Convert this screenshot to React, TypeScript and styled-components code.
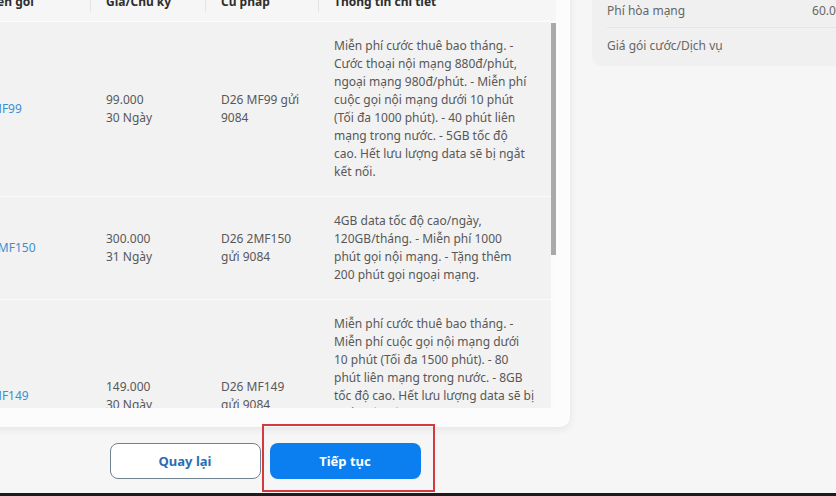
import React from 'react';
import styled, { createGlobalStyle } from 'styled-components';

type Plan = {
  name: string
  price: string
  days: string
  syntax: string[]
  info: string[]
};

const plans: Plan[] = [
  {
    name: 'MF99',
    price: '99.000',
    days: '30 Ngày',
    syntax: ['D26 MF99 gửi', '9084'],
    info: [
      'Miễn phí cước thuê bao tháng. -',
      'Cước thoại nội mạng 880đ/phút,',
      'ngoại mạng 980đ/phút. - Miễn phí',
      'cuộc gọi nội mạng dưới 10 phút',
      '(Tối đa 1000 phút). - 40 phút liên',
      'mạng trong nước. - 5GB tốc độ',
      'cao. Hết lưu lượng data sẽ bị ngắt',
      'kết nối.'
    ]
  },
  {
    name: '2MF150',
    price: '300.000',
    days: '31 Ngày',
    syntax: ['D26 2MF150', 'gửi 9084'],
    info: [
      '4GB data tốc độ cao/ngày,',
      '120GB/tháng. - Miễn phí 1000',
      'phút gọi nội mạng. - Tặng thêm',
      '200 phút gọi ngoại mạng.'
    ]
  },
  {
    name: 'MF149',
    price: '149.000',
    days: '30 Ngày',
    syntax: ['D26 MF149', 'gửi 9084'],
    info: [
      'Miễn phí cước thuê bao tháng. -',
      'Miễn phí cuộc gọi nội mạng dưới',
      '10 phút (Tối đa 1500 phút). - 80',
      'phút liên mạng trong nước. - 8GB',
      'tốc độ cao. Hết lưu lượng data sẽ bị',
      'ngắt kết nối. - Cước thoại nội',
      'mạng 880đ/phút, ngoại mạng',
      '980đ/phút. - Miễn phí SMS nội',
      'mạng.'
    ]
  }
];

const columns = ['Tên gói', 'Giá/Chu kỳ', 'Cú pháp', 'Thông tin chi tiết'];

const App = () => {
  return (
    <Screen>
      <GlobalStyle />
      <Canvas>
        <LeftCol>
          <Card>
            <HeadRow>
              {columns.map((c, i) => (
                <HeadCell key={c} divider={i > 0}>{c}</HeadCell>
              ))}
            </HeadRow>
            <BodyWrap>
              <Body>
                {plans.map(p => (
                  <Row key={p.name}>
                    <NameCell>{p.name}</NameCell>
                    <Cell>
                      <Line>{p.price}</Line>
                      <Line>{p.days}</Line>
                    </Cell>
                    <Cell>
                      {p.syntax.map(s => <Line key={s}>{s}</Line>)}
                    </Cell>
                    <InfoCell>
                      {p.info.map((t, i) => <Line key={i}>{t}</Line>)}
                    </InfoCell>
                  </Row>
                ))}
              </Body>
              <ScrollTrack>
                <ScrollThumb />
              </ScrollTrack>
            </BodyWrap>
          </Card>
          <Actions>
            <BackButton>Quay lại</BackButton>
            <Highlight>
              <NextButton>Tiếp tục</NextButton>
            </Highlight>
          </Actions>
        </LeftCol>
        <RightCol>
          <Summary>
            <SummaryRow>
              <span>Phí hòa mạng</span>
              <span>60.000đ</span>
            </SummaryRow>
            <SummaryRow>
              <span>Giá gói cước/Dịch vụ</span>
              <span></span>
            </SummaryRow>
          </Summary>
        </RightCol>
      </Canvas>
    </Screen>
  );
};

export default App;

const GlobalStyle = createGlobalStyle`
  html, body {
    margin: 0;
    padding: 0;
    background: #f6f6f6;
  }
  body {
    font-family: "Noto Sans", "Open Sans", sans-serif;
  }
`;

const Screen = styled.div`
  width: 836px;
  height: 496px;
  overflow: hidden;
  background: #f6f6f6;
  border-bottom: 3px solid #1c1c1c;
  box-sizing: border-box;
`;

const Canvas = styled.div`
  display: flex;
  gap: 22px;
  margin: -30px 0 0 -37px;
`;

const LeftCol = styled.div`
  flex: 0 0 607px;
  display: flex;
  flex-direction: column;
`;

const Card = styled.div`
  background: #fcfcfc;
  border-radius: 10px;
  box-shadow: 0 2px 8px rgba(0, 0, 0, 0.08);
  padding: 12px 14px 19px 12px;
`;

const HeadRow = styled.div`
  display: grid;
  grid-template-columns: 115px 115px 113px 1fr;
  height: 40px;
  align-items: center;
  background: #f6f6f6;
  border-bottom: 1px solid #fdfdfd;
  box-sizing: border-box;
`;

const HeadCell = styled.div<{ divider: boolean }>`
  position: relative;
  padding-left: 16px;
  font-size: 12px;
  font-weight: 700;
  color: #2e2e2e;
  white-space: nowrap;
  &::before {
    content: '';
    display: ${p => (p.divider ? 'block' : 'none')};
    position: absolute;
    left: 0;
    top: -6px;
    bottom: -2px;
    width: 1px;
    background: #e4e4e4;
  }
`;

const BodyWrap = styled.div`
  display: flex;
  height: 386px;
`;

const Body = styled.div`
  flex: 1;
  overflow: hidden;
`;

const ScrollTrack = styled.div`
  flex: 0 0 5px;
  background: #fbfbfb;
  padding-top: 1px;
  box-sizing: border-box;
`;

const ScrollThumb = styled.div`
  height: 232px;
  background: #a9a9a9;
`;

const Row = styled.div`
  display: grid;
  grid-template-columns: 115px 115px 113px 1fr;
  align-items: center;
  background: #f2f2f2;
  border-bottom: 1px solid #fafafa;
  font-size: 12px;
  line-height: 18px;
  color: #585858;
`;

const Cell = styled.div`
  padding: 0 16px;
`;

const NameCell = styled(Cell)`
  color: #3d8fd1;
`;

const InfoCell = styled(Cell)`
  padding: 15px 16px;
`;

const Line = styled.span`
  display: block;
  white-space: nowrap;
`;

const Actions = styled.div`
  display: flex;
  justify-content: center;
  gap: 9px;
  margin-top: 16px;
  padding-right: 3px;
`;

const BaseButton = styled.button`
  width: 151px;
  height: 36px;
  border-radius: 8px;
  font-family: "Noto Sans", sans-serif;
  font-size: 13px;
  font-weight: 700;
  cursor: pointer;
`;

const BackButton = styled(BaseButton)`
  background: #ffffff;
  border: 1px solid #71828f;
  color: #2a6db4;
`;

const NextButton = styled(BaseButton)`
  background: #0b7ef0;
  border: none;
  color: #ffffff;
`;

const Highlight = styled.div`
  position: relative;
  &::after {
    content: '';
    position: absolute;
    left: -8px;
    right: -14px;
    top: -19px;
    bottom: -13px;
    border: 2px solid #d23a40;
    pointer-events: none;
  }
`;

const RightCol = styled.div`
  flex: 0 0 280px;
`;

const Summary = styled.div`
  background: #f0f0f0;
  border-radius: 10px;
  padding: 23px 15px 4px;
`;

const SummaryRow = styled.div`
  display: flex;
  justify-content: space-between;
  align-items: center;
  height: 34px;
  font-size: 12px;
  color: #666666;
  & + & {
    border-top: 1px solid #e5e5e5;
  }
`;
